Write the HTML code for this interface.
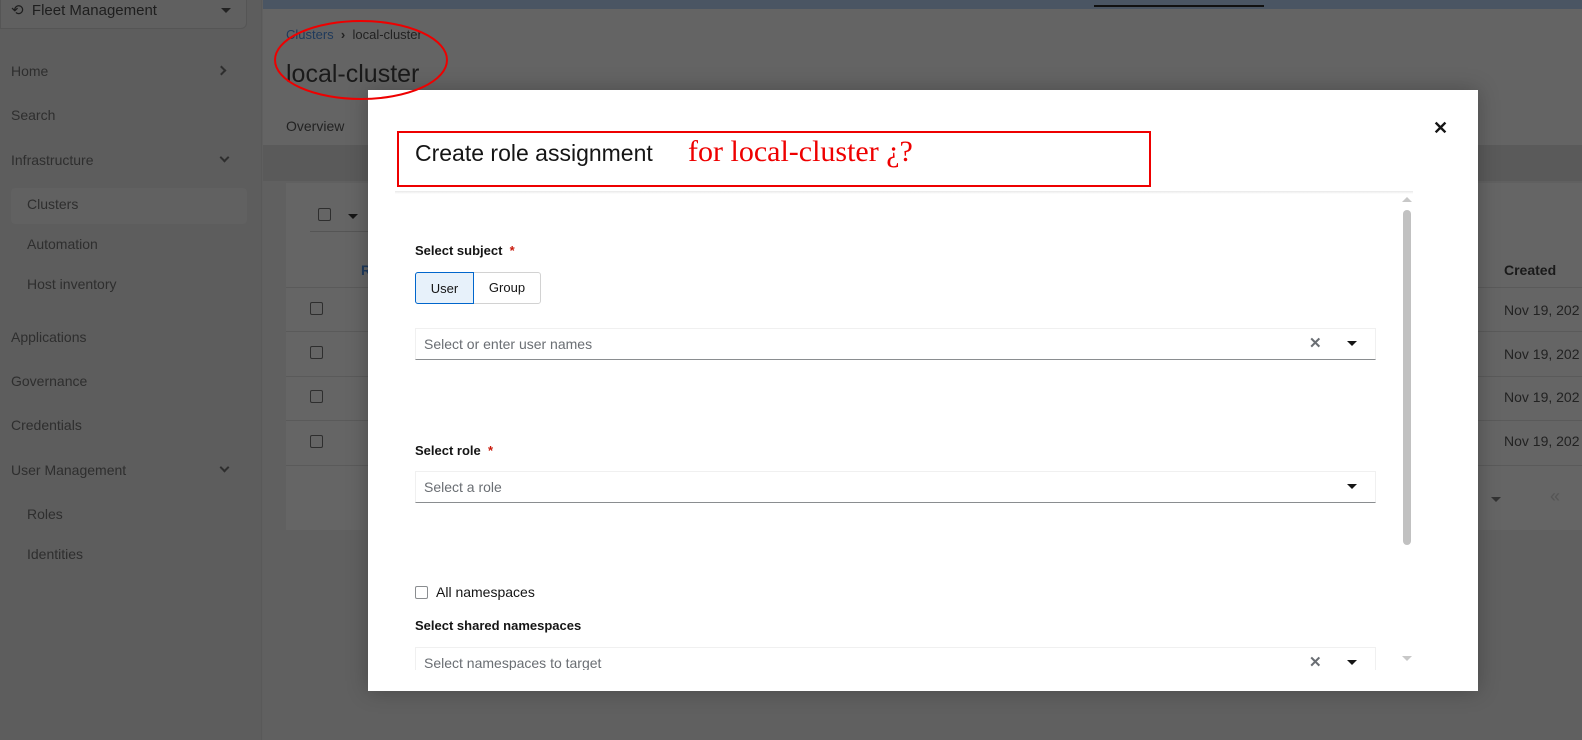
<!DOCTYPE html>
<html><head><meta charset="utf-8"><style>
*{box-sizing:border-box;margin:0;padding:0}
body{width:1582px;height:740px;overflow:hidden;background:#5f5f5f;font-family:"Liberation Sans",sans-serif;position:relative;color:#2a2a2a}
.a{position:absolute}
.sb{left:0;top:0;width:262px;height:740px;background:#5d5d5d;border-right:1px solid #595959}
.nav{position:absolute;font-size:14px;color:#2e2e2e}
.chev{position:absolute;width:7px;height:7px;border-right:2px solid #2e2e2e;border-bottom:2px solid #2e2e2e}
.main{left:263px;top:0;width:1319px;height:740px;background:#606060}
.m{font-size:14px}
.lbl{font-size:13px;font-weight:bold;color:#151515}
.inp{position:absolute;left:415px;width:961px;height:32px;border:1px solid #f0f0f0;border-bottom:1px solid #8a8d90;font-size:14px;color:#6a6e73;padding:7px 8px}
.caret{position:absolute;width:0;height:0;border-left:5px solid transparent;border-right:5px solid transparent;border-top:5px solid #151515}
.cb{position:absolute;width:13px;height:13px;border:1px solid #2e2e2e;border-radius:2px}
</style></head><body>
<div class="a sb">
 <div class="a" style="left:0;top:-8px;width:247px;height:37px;border:1px solid #555;border-radius:0 0 6px 0;background:#606060"></div>
 <div class="nav" style="left:11px;top:1px;font-size:15px;color:#1e1e1e">⟲&nbsp; Fleet Management</div>
 <div class="caret" style="left:221px;top:8px;border-top-color:#222"></div>
 <div class="nav" style="left:11px;top:63px">Home</div><div class="chev" style="left:218px;top:67px;transform:rotate(-45deg)"></div>
 <div class="nav" style="left:11px;top:107px">Search</div>
 <div class="nav" style="left:11px;top:152px">Infrastructure</div><div class="chev" style="left:221px;top:154px;transform:rotate(45deg)"></div>
 <div class="a" style="left:11px;top:188px;width:236px;height:36px;background:#616161;border-radius:4px"></div>
 <div class="nav" style="left:27px;top:196px">Clusters</div>
 <div class="nav" style="left:27px;top:236px">Automation</div>
 <div class="nav" style="left:27px;top:276px">Host inventory</div>
 <div class="nav" style="left:11px;top:329px">Applications</div>
 <div class="nav" style="left:11px;top:373px">Governance</div>
 <div class="nav" style="left:11px;top:417px">Credentials</div>
 <div class="nav" style="left:11px;top:462px">User Management</div><div class="chev" style="left:221px;top:464px;transform:rotate(45deg)"></div>
 <div class="nav" style="left:27px;top:506px">Roles</div>
 <div class="nav" style="left:27px;top:546px">Identities</div>
</div>
<div class="a main"></div>
<div class="a" style="left:263px;top:0;width:1319px;height:9px;background:#4a5563"></div>
<div class="a" style="left:1094px;top:5px;width:170px;height:2px;background:#111"></div>
<div class="a" style="left:263px;top:9px;width:1319px;height:136px;background:#646464"></div>
<div class="a" style="left:263px;top:145px;width:1319px;height:36px;background:#5a5a5a"></div>
<div class="a m" style="left:286px;top:27px;font-size:13px;color:#1f3a5c">Clusters <span style="color:#222;font-weight:bold">&nbsp;›&nbsp;</span> <span style="color:#222">local-cluster</span></div>
<div class="a" style="left:286px;top:60px;font-size:25px;color:#1a1a1a">local-cluster</div>
<div class="a m" style="left:286px;top:118px;color:#222">Overview</div>
<div class="a" style="left:286px;top:183px;width:1296px;height:347px;background:#656565"></div>
<div class="a" style="left:310px;top:200px;width:60px;height:32px;border-bottom:1px solid #555"></div>
<div class="cb" style="left:318px;top:208px"></div><div class="caret" style="left:348px;top:214px"></div>
<div class="a" style="left:361px;top:262px;font-size:14px;font-weight:bold;color:#1f3a5c">R</div>
<div class="a" style="left:1504px;top:262px;font-size:14px;font-weight:bold;color:#1a1a1a">Created</div>
<div class="a" style="left:286px;top:287px;width:1296px;height:1px;background:#5a5a5a"></div>
<div class="a" style="left:286px;top:331px;width:1296px;height:1px;background:#5a5a5a"></div>
<div class="a" style="left:286px;top:376px;width:1296px;height:1px;background:#5a5a5a"></div>
<div class="a" style="left:286px;top:420px;width:1296px;height:1px;background:#5a5a5a"></div>
<div class="a" style="left:286px;top:465px;width:1296px;height:1px;background:#5a5a5a"></div>
<div class="cb" style="left:310px;top:302px"></div><div class="cb" style="left:310px;top:346px"></div><div class="cb" style="left:310px;top:390px"></div><div class="cb" style="left:310px;top:435px"></div>
<div class="a m" style="left:1504px;top:302px;color:#222">Nov 19, 202</div>
<div class="a m" style="left:1504px;top:346px;color:#222">Nov 19, 202</div>
<div class="a m" style="left:1504px;top:389px;color:#222">Nov 19, 202</div>
<div class="a m" style="left:1504px;top:433px;color:#222">Nov 19, 202</div>
<div class="caret" style="left:1491px;top:497px;border-top-color:#333"></div>
<div class="a" style="left:1550px;top:486px;color:#555;font-size:18px">«</div>

<!-- modal -->
<div class="a" style="left:368px;top:90px;width:1110px;height:601px;background:#fff;box-shadow:0 0 20px rgba(0,0,0,.25)"></div>
<div class="a" style="left:415px;top:140px;font-size:23px;color:#151515">Create role assignment</div>
<div class="a" style="left:1433px;top:118px;font-size:18px;font-weight:bold;color:#151515">✕</div>
<div class="a" style="left:395px;top:191px;width:1018px;height:3px;background:linear-gradient(#e8e8e8,#fff)"></div>
<div class="a" style="left:1403px;top:210px;width:8px;height:335px;background:#c1c1c1;border-radius:4px"></div>
<div class="caret" style="left:1402px;top:197px;border-top:none;border-bottom:5px solid #c8c8c8"></div>
<div class="caret" style="left:1402px;top:656px;border-top-color:#c8c8c8"></div>
<div class="lbl a" style="left:415px;top:243px">Select subject <span style="color:#c9190b">&nbsp;*</span></div>
<div class="a" style="left:415px;top:272px;width:126px;height:32px;border:1px solid #d2d2d2;border-radius:3px"></div>
<div class="a" style="left:415px;top:272px;width:59px;height:32px;border:1px solid #06c;background:#e7f1fa;border-radius:3px 0 0 3px;font-size:13px;color:#151515;text-align:center;padding-top:8px">User</div>
<div class="a" style="left:474px;top:280px;width:66px;font-size:13px;color:#151515;text-align:center">Group</div>
<div class="inp" style="top:328px">Select or enter user names</div>
<div class="a" style="left:1309px;top:334px;color:#6a6e73;font-size:15px;font-weight:bold">✕</div>
<div class="caret" style="left:1347px;top:341px"></div>
<div class="lbl a" style="left:415px;top:443px">Select role <span style="color:#c9190b">&nbsp;*</span></div>
<div class="inp" style="top:471px">Select a role</div>
<div class="caret" style="left:1347px;top:484px"></div>
<div class="cb" style="left:415px;top:586px;border-color:#8a8d90"></div>
<div class="a" style="left:436px;top:584px;font-size:14px;color:#151515">All namespaces</div>
<div class="lbl a" style="left:415px;top:618px">Select shared namespaces</div>
<div class="a" style="left:415px;top:647px;width:961px;height:23px;border:1px solid #f0f0f0;border-bottom:none;overflow:hidden;font-size:14px;color:#6a6e73;padding:7px 8px">Select namespaces to target</div>
<div class="a" style="left:1309px;top:653px;color:#6a6e73;font-size:15px;font-weight:bold">✕</div>
<div class="caret" style="left:1347px;top:660px"></div>

<!-- annotations -->
<div class="a" style="left:397px;top:131px;width:754px;height:56px;border:2px solid #e00"></div>
<div class="a" style="left:688px;top:135px;font-family:'Liberation Serif',serif;font-size:30px;color:#e00">for local-cluster ¿?</div>
<svg class="a" style="left:270px;top:18px" width="182" height="86"><ellipse cx="91" cy="42" rx="86" ry="39" fill="none" stroke="#e00" stroke-width="2"/></svg>
</body></html>
